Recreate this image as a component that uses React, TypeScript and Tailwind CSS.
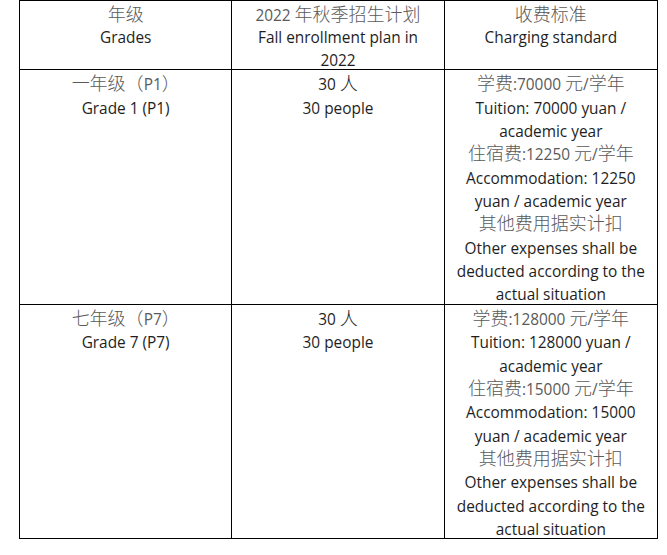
type Line = { text: string; zh?: boolean; dark?: boolean };

const zh = (text: string, dark = false): Line => ({ text, zh: true, dark });
const en = (text: string): Line => ({ text });

const header: Line[][] = [
  [zh('年级'), en('Grades')],
  [zh('2022 年秋季招生计划'), en('Fall enrollment plan in'), en('2022')],
  [zh('收费标准'), en('Charging standard')],
];

const fees = (tuition: string, board: string): Line[] => [
  zh(`学费:${tuition} 元/学年`),
  en(`Tuition: ${tuition} yuan /`),
  en('academic year'),
  zh(`住宿费:${board} 元/学年`),
  en(`Accommodation: ${board}`),
  en('yuan / academic year'),
  zh('其他费用据实计扣'),
  en('Other expenses shall be'),
  en('deducted according to the'),
  en('actual situation'),
];

const rows: Line[][][] = [
  [[zh('一年级（P1）'), en('Grade 1 (P1)')], [zh('30 人', true), en('30 people')], fees('70000', '12250')],
  [[zh('七年级（P7）'), en('Grade 7 (P7)')], [zh('30 人', true), en('30 people')], fees('128000', '15000')],
];

// split a line into CJK runs and latin runs
function Segments({ text }: { text: string }) {
  const parts = text.split(/([\u3000-\u9fff\uff00-\uffef]+)/).filter(Boolean);
  return (
    <>
      {parts.map((p, i) =>
        /[\u3000-\u9fff\uff00-\uffef]/.test(p) ? (
          <span key={i} className="text-[18px] font-light [font-family:'Noto_Sans_CJK_SC',sans-serif]">
            {p}
          </span>
        ) : (
          <span key={i}>{p}</span>
        )
      )}
    </>
  );
}

function Cell({ lines, last, head }: { lines: Line[]; last?: boolean; head?: boolean }) {
  return (
    <div className={`flex flex-col items-center ${last ? '' : 'border-r-[1.5px] border-black'}`}>
      {lines.map((line, i) => (
        <div
          key={i}
          className={`${
            head ? 'h-[22.8px] leading-[22.8px]' : 'h-[23.35px] leading-[23.35px]'
          } text-[15.4px] whitespace-pre [font-family:'Open_Sans',sans-serif] ${
            line.zh ? 'translate-y-px' : 'translate-y-[2.5px]'
          } ${line.zh && !line.dark ? 'text-[#5a5a5a]' : 'text-[#1e1e1e]'}`}
        >
          {line.zh ? <Segments text={line.text} /> : line.text}
        </div>
      ))}
    </div>
  );
}

export default function App() {
  return (
    <div className="w-[667px] h-[555px] bg-white pl-[19px]">
      <div className="w-[639px] border-[1.5px] border-black">
        {/* Header */}
        <div className="grid grid-cols-3 border-b-[1.5px] border-black">
          {header.map((lines, i) => (
            <Cell key={i} lines={lines} last={i === 2} head />
          ))}
        </div>

        {/* Body rows */}
        {rows.map((row, r) => (
          <div
            key={r}
            className={`grid grid-cols-3 ${r === rows.length - 1 ? '' : 'border-b-[1.5px] border-black'}`}
          >
            {row.map((lines, i) => (
              <Cell key={i} lines={lines} last={i === 2} />
            ))}
          </div>
        ))}
      </div>
    </div>
  );
}
